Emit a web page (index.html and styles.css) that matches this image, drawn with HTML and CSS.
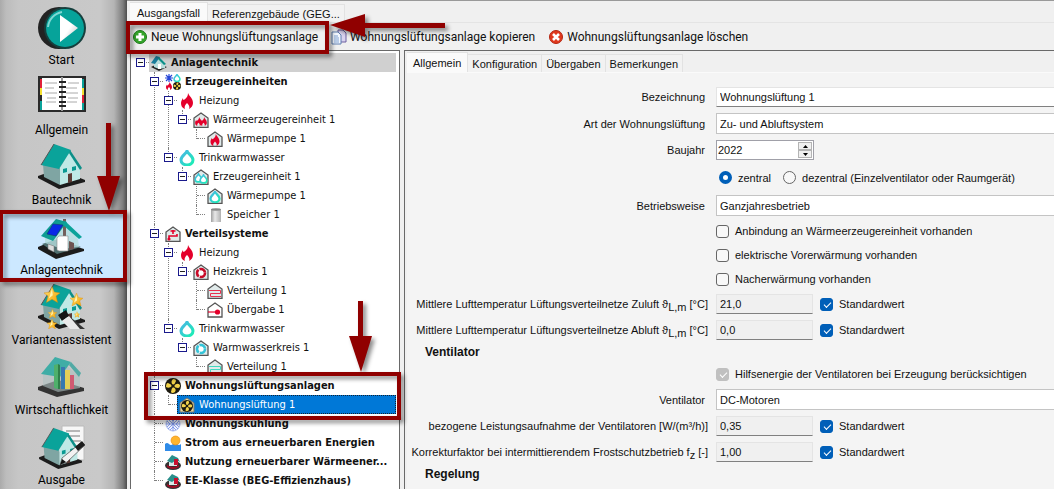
FILE: index.html
```
<!DOCTYPE html>
<html lang="de">
<head>
  <meta charset="UTF-8">
  <meta name="viewport" content="width=device-width, initial-scale=1.0">
  <title>Anlagentechnik</title>
  <link rel="stylesheet" href="styles.css">
</head>
<body>
  <!-- icon sprite -->
  <svg class="sprite" aria-hidden="true">
    <defs>
      <linearGradient id="shine" x1="0" y1="0" x2="1" y2="1">
        <stop offset="0" stop-color="#fff"/><stop offset=".5" stop-color="#fff"/><stop offset="1" stop-color="#bbb"/>
      </linearGradient>
      <linearGradient id="metal" x1="0" x2="1">
        <stop offset="0" stop-color="#a0a0a0"/><stop offset=".4" stop-color="#e8e8e8"/><stop offset="1" stop-color="#b0b0b0"/>
      </linearGradient>
      <linearGradient id="water" x1="0" x2="1" y2="1">
        <stop offset="0" stop-color="#4ab4e6"/><stop offset="1" stop-color="#19f0b4"/>
      </linearGradient>
      <linearGradient id="gold" x1="0" y1="0" x2="1" y2="1">
        <stop offset="0" stop-color="#ffe27a"/><stop offset="1" stop-color="#f5a300"/>
      </linearGradient>
    </defs>
    <symbol id="house-big" viewBox="0 0 48 46">
      <path d="M0 33 20 26 47 37 47 39 21 46 0 35z" fill="#1c1c1c"/>
      <path d="M5 21 22 25V42L6 34z" fill="#7fa5a3"/>
      <path d="M22 25 32 8 42 25V36L22 42z" fill="#bfe9e6"/>
      <path d="M3 22 16 1 33 7 21 26z" fill="#0aa39a"/>
      <path d="M3 22 16 1" stroke="#555" fill="none"/>
      <path d="M32 7 44 25 42 27 31 10z" fill="#0c8f88"/>
      <path d="M25 26l4-1v4l-4 1zM34 24l4-1v4l-4 1z" fill="#0a9a92"/>
      <path d="M30 31l4-1v9l-4 1z" fill="#5c3a34"/>
    </symbol>
    <symbol id="nav-start" viewBox="0 0 48 46">
      <ellipse cx="21" cy="25" rx="21" ry="21" fill="#222"/>
      <circle cx="27" cy="25" r="21" fill="#163f3d"/>
      <circle cx="27" cy="25" r="19" fill="#06a39a"/>
      <path d="M10 24A17 17 0 0 1 24 9" stroke="#7fd8d3" stroke-width="2" fill="none"/>
      <path d="M22 12 40 25 22 39z" fill="url(#shine)"/>
    </symbol>
    <symbol id="nav-book" viewBox="0 0 48 46">
      <path d="M0 3h48v36H0z" fill="#2a2a2a"/>
      <path d="M2 6h4v9H2z" fill="#e02038"/><path d="M2 15h4v7H2z" fill="#f5e030"/><path d="M2 28h4v9H2z" fill="#0aa39a"/>
      <path d="M42 6h4v9h-4z" fill="#0aa39a"/><path d="M42 15h4v7h-4z" fill="#f5e030"/><path d="M42 22h4v8h-4z" fill="#e02038"/><path d="M42 30h4v7h-4z" fill="#0aa39a"/>
      <path d="M4 5h19v32H4zM25 5h19v32H25z" fill="#fff"/>
      <path d="M7 10h12M7 15h9M7 20h12M9 25h9M8 29h10M30 10h11M28 15h11M28 20h12M30 25h10M29 29h10" stroke="#aaa"/>
      <path d="M24 4v34" stroke="#999" stroke-width="2"/>
      <path d="M21 9h7M21 14h7M21 19h7M21 24h7M21 29h7M21 33h7" stroke="#222" stroke-width="2"/>
    </symbol>
    <symbol id="nav-anlage" viewBox="0 0 48 46">
      <path d="M0 34 17 27 46 36 46 38 18 46 0 36z" fill="#1c1c1c"/>
      <path d="M4 31 20 26 43 34 19 41z" fill="#4f6f70"/>
      <path d="M7 24 28 8 40 26 41 34 24 36 7 30z" fill="#b4dcdc" opacity=".8"/>
      <path d="M25 6h3v17h-3z" fill="#73605c"/>
      <path d="M3 23 18 6 29 9 15 28z" fill="#0f9c93"/>
      <path d="M27 8 44 24 41 26 25 12z" fill="#0aa39a"/>
      <path d="M15 11l10 1-7 11-9-2z" fill="#0a28e6" stroke="#12386b" stroke-width=".6"/>
      <path d="M19 25l2-2h9v15h-9l-2-1z" fill="#fff" stroke="#8a8a8a" stroke-width=".6"/>
      <path d="M10 31l6 2v6l-6-3z" fill="#ddd" stroke="#777" stroke-width=".5"/>
      <path d="M31 28l5 2v6l-5 1z" fill="#6d5450"/>
    </symbol>
    <symbol id="star" viewBox="0 0 20 20">
      <path d="M10 0l3 7 7 1-5 4 2 8-7-4-7 4 2-8-5-4 7-1z" fill="url(#gold)" stroke="#d98a00" stroke-width=".5"/>
      <path d="M10 3l1 8-5 4z" fill="#fff3b0"/>
    </symbol>
    <symbol id="nav-variante" viewBox="0 0 48 46">
      <use href="#house-big" width="48" height="46"/>
      <use href="#star" x="6" y="3" width="16" height="17"/>
      <use href="#star" x="32" y="10" width="13" height="13"/>
      <use href="#star" x="10" y="26" width="9" height="9"/>
      <use href="#star" x="8" y="36" width="12" height="10"/>
      <use href="#star" x="36" y="28" width="6" height="7"/>
      <path d="M20 32 28 27 31 33 24 38z" fill="#161616"/>
      <path d="M24 38 31 33 44 46H32z" fill="#e9e9e9"/>
      <path d="M31 33 47 46H42z" fill="#333"/>
    </symbol>
    <symbol id="nav-chart" viewBox="0 0 48 46">
      <path d="M0 34 20 27 46 35 46 38 19 44 0 37z" fill="#333"/>
      <path d="M5 22 20 5 42 24 42 35 20 39 5 33z" fill="#aebfbf" opacity=".6"/>
      <path d="M3 21 17 4 33 9 22 24z" fill="#3fada6"/>
      <path d="M33 9 43 20 41 24 31 12z" fill="#52aaa5"/>
      <path d="M16 12l4-1v25l-4-1z" fill="#4fb06b"/><path d="M20 11l2 1v24l-2 0z" fill="#2f804a"/>
      <path d="M23 14h4v22h-4z" fill="#3778b0"/>
      <path d="M27 17h5v19h-5z" fill="#e3cf58"/>
      <path d="M32 22h4v14h-4z" fill="#d05a72"/>
    </symbol>
    <symbol id="nav-ausgabe" viewBox="0 0 48 46">
      <path d="M24 3h22v34H24z" fill="#f7f7f7" stroke="#bbb"/>
      <path d="M28 8h14M28 13h14M34 18h9M38 23h6" stroke="#777"/>
      <use href="#house-big" x="0" y="4" width="46" height="42"/>
      <path d="M22 42 24 35 44 19 47 22 29 39z" fill="#f2f2f2" stroke="#333" stroke-width=".6"/>
      <path d="M37 24 44 18 47 22 40 28z" fill="#1c1c1c"/>
      <path d="M22 42 24 36 28 39z" fill="#111"/>
    </symbol>

    <!-- 16px icons -->
    <symbol id="t-anlage" viewBox="0 0 16 16">
      <path d="M0 12 6 9l10 3-8 4z" fill="#222"/>
      <path d="M3 7 10 3l4 5v5l-6 1-5-2z" fill="#b9dedd"/>
      <path d="M0 8 5 1l4 1-5 7z" fill="#1a7d9b"/>
      <path d="M8 2l7 7-2 1-6-6z" fill="#0a8f88"/>
      <path d="M7 9h3v5H7z" fill="#fff"/>
    </symbol>
    <symbol id="flame" viewBox="0 0 16 16">
      <path d="M9 0C10 3 14 5 14 10c0 3-2 5-4 6 1-2 0-4-2-6-2 2-3 4-2 6-3-1-4-3-4-6 0-2 1-3 2-5 0 1 0 2 1 2C7 5 9 4 9 0z" fill="#e4002b"/>
    </symbol>
    <symbol id="drop" viewBox="0 0 16 16">
      <path d="M8 1c1 3 6 5 6 9a6 5 0 0 1-12 0c0-4 5-6 6-9z" fill="#fff" stroke="url(#water)" stroke-width="3"/>
    </symbol>
    <symbol id="fan" viewBox="0 0 16 16">
      <circle cx="8" cy="8" r="8" fill="#1c1a10"/>
      <path d="M8 7Q5 4 8 1 11 1 11 3 10 6 8 7zM9 8q3-4 6-1 0 3-2 3-3 0-4-2zM8 9q4 2 2 5-3 2-4 0 0-3 2-5zM7 8q-3 3-6 1Q1 5 3 5q3 1 4 3z" fill="#f3d34a"/>
      <circle cx="8" cy="8" r="1.4" fill="#1c1a10"/>
    </symbol>
    <symbol id="snow" viewBox="0 0 16 16">
      <circle cx="8" cy="8" r="7" fill="#f2f5ff" stroke="#a9b9ef"/>
      <path d="M8 1v14M1 8h14M3 3l10 10M13 3 3 13M5 2l3 3 3-3M5 14l3-3 3 3M2 5l3 3-3 3M14 5l-3 3 3 3" stroke="#6f8ae8" fill="none" stroke-width=".8"/>
    </symbol>
    <symbol id="snow-small" viewBox="0 0 8 8">
      <path d="M4 0v8M0 4h8M1 1l6 6M7 1 1 7" stroke="#2747d8" stroke-width="1.2"/>
    </symbol>
    <symbol id="t-erzeuger" viewBox="0 0 16 16">
      <use href="#snow-small" width="8" height="8"/>
      <use href="#drop" x="8" width="8" height="8"/>
      <use href="#flame" y="8" width="8" height="8"/>
      <use href="#fan" x="8" y="8" width="8" height="8"/>
    </symbol>
    <symbol id="shell" viewBox="0 0 16 16">
      <path d="M1 15.300V6L8 1l7 5v9.300z" fill="#e0eaea" stroke="#555" stroke-width="1.300"/>
    </symbol>
    <symbol id="t-flames" viewBox="0 0 16 16">
      <use href="#shell" width="16" height="16"/>
      <use href="#flame" x="1" y="4" width="9" height="11"/><use href="#flame" x="6" y="4" width="9" height="11"/>
    </symbol>
    <symbol id="t-flame" viewBox="0 0 16 16">
      <use href="#shell" width="16" height="16"/><use href="#flame" x="2" y="3" width="12" height="12"/>
    </symbol>
    <symbol id="t-drops" viewBox="0 0 16 16">
      <use href="#shell" width="16" height="16"/>
      <use href="#drop" x="1" y="4" width="9" height="10"/><use href="#drop" x="6" y="5" width="9" height="10"/>
    </symbol>
    <symbol id="t-drop" viewBox="0 0 16 16">
      <use href="#shell" width="16" height="16"/><use href="#drop" x="2" y="3" width="12" height="12"/>
    </symbol>
    <symbol id="t-tank" viewBox="0 0 16 16">
      <path d="M4 2h10v13H4z" fill="url(#metal)"/><ellipse cx="9" cy="2.500" rx="5" ry="1.200" fill="#888"/>
    </symbol>
    <symbol id="t-tap" viewBox="0 0 16 16">
      <use href="#shell" width="16" height="16"/>
      <path d="M8 4v4M5.500 5h5M4 13v-3h8V8" stroke="#e4002b" stroke-width="1.600" fill="none"/><circle cx="4" cy="13" r="1.600" fill="#e4002b"/>
    </symbol>
    <symbol id="t-cycle" viewBox="0 0 16 16">
      <use href="#shell" width="16" height="16"/>
      <circle cx="8" cy="9" r="4" fill="#fff" stroke="#c80a28" stroke-width="2.600" stroke-dasharray="7.400 1"/>
    </symbol>
    <symbol id="t-cycle-water" viewBox="0 0 16 16">
      <use href="#shell" width="16" height="16"/>
      <circle cx="8" cy="9" r="4" fill="#fff" stroke="#35c4d8" stroke-width="2.600" stroke-dasharray="7.400 1"/>
    </symbol>
    <symbol id="t-pipes" viewBox="0 0 16 16">
      <use href="#shell" width="16" height="16"/>
      <path d="M2 7.500h11.500v3H3.500v3H14" stroke="#e8304e" fill="none"/>
    </symbol>
    <symbol id="t-pipes-water" viewBox="0 0 16 16">
      <use href="#shell" width="16" height="16"/>
      <path d="M2 7.500h11.500v3H3.500v3H14" stroke="#3fd8c0" fill="none"/>
    </symbol>
    <symbol id="t-transfer" viewBox="0 0 16 16">
      <path d="M1 15V6L8 1l7 5v9z" fill="#fff" stroke="#555" stroke-width="1.300"/>
      <path d="M1 10h9" stroke="#e4002b" stroke-width="1.200"/><circle cx="10.500" cy="10" r="2.600" fill="#e4002b"/>
    </symbol>
    <symbol id="t-housefan" viewBox="0 0 16 16">
      <path d="M1 15V6L8 1l7 5v9z" fill="#e6d79a" stroke="#777"/><use href="#fan" x="2" y="3" width="12" height="12"/>
    </symbol>
    <symbol id="t-sun" viewBox="0 0 16 16">
      <path d="M0 9q2-2 4 0t4 0 4 0 4 0v7H0z" fill="#2f8be8"/><circle cx="10.500" cy="5.500" r="4.500" fill="#ffb52e" stroke="#e88a10" stroke-width=".6"/>
    </symbol>
    <symbol id="t-ee" viewBox="0 0 16 16">
      <ellipse cx="8" cy="11.500" rx="8" ry="4.500" fill="#333"/>
      <path d="M4 6h8v6H4z" fill="#d8e8e8"/><path d="M2 7l5-6 6 3 2 4-4-2-4 3z" fill="#2a8f8b"/>
      <path d="M9 5h4v6H9z" fill="#c8102e"/><path d="M2 11q6 4 12 0v2q-6 4-12 0z" fill="#a00c24"/>
    </symbol>
    <symbol id="b-add" viewBox="0 0 16 16">
      <circle cx="8" cy="8" r="6.500" fill="#35a52b" stroke="#1d7a1a"/><path d="M8 4v8M4 8h8" stroke="#fff" stroke-width="3"/>
    </symbol>
    <symbol id="b-copy" viewBox="0 0 16 16">
      <path d="M7 1h5l3 3v9H7z" fill="#d9d3ef" stroke="#6c5fa0"/><path d="M1 3h6l3 3v9H1z" fill="#f4f8ff" stroke="#5f7fb0"/><path d="M3 7h4M3 9h5M3 11h5M3 13h5" stroke="#7fa0d0"/>
    </symbol>
    <symbol id="b-del" viewBox="0 0 16 16">
      <circle cx="8" cy="8" r="6.500" fill="#e0381c" stroke="#b32410"/><path d="M5 5l6 6M11 5l-6 6" stroke="#fff" stroke-width="2.600"/>
    </symbol>
  </svg>

  <div class="app">
    <nav class="sidebar">
      <a href="#start"><svg><use href="#nav-start"/></svg>Start</a>
      <a href="#allgemein"><svg><use href="#nav-book"/></svg>Allgemein</a>
      <a href="#bautechnik"><svg><use href="#house-big"/></svg>Bautechnik</a>
      <a href="#anlagentechnik" class="active"><svg><use href="#nav-anlage"/></svg>Anlagentechnik</a>
      <a href="#varianten"><svg><use href="#nav-variante"/></svg>Variantenassistent</a>
      <a href="#wirtschaft"><svg><use href="#nav-chart"/></svg>Wirtschaftlichkeit</a>
      <a href="#ausgabe"><svg><use href="#nav-ausgabe"/></svg>Ausgabe</a>
    </nav>

    <main class="main">
      <div class="tabs case-tabs">
        <button class="tab active">Ausgangsfall</button>
        <button class="tab">Referenzgebäude (GEG...</button>
      </div>
      <div class="toolbar">
        <button><svg><use href="#b-add"/></svg>Neue Wohnungslüftungsanlage</button>
        <button><svg><use href="#b-copy"/></svg>Wohnungslüftungsanlage kopieren</button>
        <button><svg><use href="#b-del"/></svg>Wohnungslüftungsanlage löschen</button>
      </div>

      <div class="panels">
        <section class="tree-panel">
          <ul class="tree">
            <li>
              <div class="row bold current"><button class="toggle" aria-label="Zuklappen"></button><span class="node"><svg><use href="#t-anlage"/></svg>Anlagentechnik</span></div>
              <ul>
                <li>
                  <div class="row bold"><button class="toggle" aria-label="Zuklappen"></button><span class="node"><svg><use href="#t-erzeuger"/></svg>Erzeugereinheiten</span></div>
                  <ul>
                    <li>
                      <div class="row"><button class="toggle" aria-label="Zuklappen"></button><span class="node"><svg><use href="#flame"/></svg>Heizung</span></div>
                      <ul>
                        <li>
                          <div class="row"><button class="toggle" aria-label="Zuklappen"></button><span class="node"><svg><use href="#t-flames"/></svg>Wärmeerzeugereinheit 1</span></div>
                          <ul>
                            <li><div class="row"><span class="node"><svg><use href="#t-flame"/></svg>Wärmepumpe 1</span></div></li>
                          </ul>
                        </li>
                      </ul>
                    </li>
                    <li>
                      <div class="row"><button class="toggle" aria-label="Zuklappen"></button><span class="node"><svg><use href="#drop"/></svg>Trinkwarmwasser</span></div>
                      <ul>
                        <li>
                          <div class="row"><button class="toggle" aria-label="Zuklappen"></button><span class="node"><svg><use href="#t-drops"/></svg>Erzeugereinheit 1</span></div>
                          <ul>
                            <li><div class="row"><span class="node"><svg><use href="#t-drop"/></svg>Wärmepumpe 1</span></div></li>
                            <li><div class="row"><span class="node"><svg><use href="#t-tank"/></svg>Speicher 1</span></div></li>
                          </ul>
                        </li>
                      </ul>
                    </li>
                  </ul>
                </li>
                <li>
                  <div class="row bold"><button class="toggle" aria-label="Zuklappen"></button><span class="node"><svg><use href="#t-tap"/></svg>Verteilsysteme</span></div>
                  <ul>
                    <li>
                      <div class="row"><button class="toggle" aria-label="Zuklappen"></button><span class="node"><svg><use href="#flame"/></svg>Heizung</span></div>
                      <ul>
                        <li>
                          <div class="row"><button class="toggle" aria-label="Zuklappen"></button><span class="node"><svg><use href="#t-cycle"/></svg>Heizkreis 1</span></div>
                          <ul>
                            <li><div class="row"><span class="node"><svg><use href="#t-pipes"/></svg>Verteilung 1</span></div></li>
                            <li><div class="row"><span class="node"><svg><use href="#t-transfer"/></svg>Übergabe 1</span></div></li>
                          </ul>
                        </li>
                      </ul>
                    </li>
                    <li>
                      <div class="row"><button class="toggle" aria-label="Zuklappen"></button><span class="node"><svg><use href="#drop"/></svg>Trinkwarmwasser</span></div>
                      <ul>
                        <li>
                          <div class="row"><button class="toggle" aria-label="Zuklappen"></button><span class="node"><svg><use href="#t-cycle-water"/></svg>Warmwasserkreis 1</span></div>
                          <ul>
                            <li><div class="row"><span class="node"><svg><use href="#t-pipes-water"/></svg>Verteilung 1</span></div></li>
                          </ul>
                        </li>
                      </ul>
                    </li>
                  </ul>
                </li>
                <li>
                  <div class="row bold"><button class="toggle" aria-label="Zuklappen"></button><span class="node"><svg><use href="#fan"/></svg>Wohnungslüftungsanlagen</span></div>
                  <ul>
                    <li><div class="row selected"><span class="node"><svg><use href="#t-housefan"/></svg>Wohnungslüftung 1</span></div></li>
                  </ul>
                </li>
                <li><div class="row bold"><span class="node"><svg><use href="#snow"/></svg>Wohnungskühlung</span></div></li>
                <li><div class="row bold"><span class="node"><svg><use href="#t-sun"/></svg>Strom aus erneuerbaren Energien</span></div></li>
                <li><div class="row bold"><span class="node"><svg><use href="#t-ee"/></svg>Nutzung erneuerbarer Wärmeener...</span></div></li>
                <li><div class="row bold"><span class="node"><svg><use href="#t-ee"/></svg>EE-Klasse (BEG-Effizienzhaus)</span></div></li>
              </ul>
            </li>
          </ul>
        </section>

        <section class="detail">
          <div class="tabs detail-tabs">
            <button class="tab active">Allgemein</button>
            <button class="tab">Konfiguration</button>
            <button class="tab">Übergaben</button>
            <button class="tab">Bemerkungen</button>
          </div>
          <form class="form">
            <div class="field">
              <label for="name">Bezeichnung</label>
              <input class="text" type="text" id="name" value="Wohnungslüftung 1">
            </div>
            <div class="field">
              <label for="art">Art der Wohnungslüftung</label>
              <select id="art"><option>Zu- und Abluftsystem</option></select>
            </div>
            <div class="field">
              <label for="baujahr">Baujahr</label>
              <div class="spin">
                <input type="text" id="baujahr" value="2022">
                <div class="spin-buttons">
                  <button type="button" aria-label="Mehr"><svg viewBox="0 0 5 3"><path d="M0 3h5L2.500 0z"/></svg></button>
                  <button type="button" aria-label="Weniger"><svg viewBox="0 0 5 3"><path d="M0 0h5L2.500 3z"/></svg></button>
                </div>
              </div>
            </div>
            <div class="options radios">
              <label><input type="radio" name="system" checked>zentral</label>
              <label><input type="radio" name="system">dezentral (Einzelventilator oder Raumgerät)</label>
            </div>
            <div class="field">
              <label for="betrieb">Betriebsweise</label>
              <select id="betrieb"><option>Ganzjahresbetrieb</option></select>
            </div>
            <div class="options"><label><input type="checkbox">Anbindung an Wärmeerzeugereinheit vorhanden</label></div>
            <div class="options"><label><input type="checkbox">elektrische Vorerwärmung vorhanden</label></div>
            <div class="options"><label><input type="checkbox">Nacherwärmung vorhanden</label></div>
            <div class="field unit">
              <label for="zuluft">Mittlere Lufttemperatur Lüftungsverteilnetze Zuluft ϑ<sub>L,m</sub> [°C]</label>
              <input class="text short" type="text" id="zuluft" value="21,0" readonly>
              <label class="std"><input type="checkbox" checked>Standardwert</label>
            </div>
            <div class="field unit">
              <label for="abluft">Mittlere Lufttemperatur Lüftungsverteilnetze Abluft ϑ<sub>L,m</sub> [°C]</label>
              <input class="text short" type="text" id="abluft" value="0,0" readonly>
              <label class="std"><input type="checkbox" checked>Standardwert</label>
            </div>
            <h2>Ventilator</h2>
            <div class="options"><label><input type="checkbox" checked disabled>Hilfsenergie der Ventilatoren bei Erzeugung berücksichtigen</label></div>
            <div class="field">
              <label for="ventilator">Ventilator</label>
              <select id="ventilator"><option>DC-Motoren</option></select>
            </div>
            <div class="field unit">
              <label for="leistung">bezogene Leistungsaufnahme der Ventilatoren [W/(m³/h)]</label>
              <input class="text short" type="text" id="leistung" value="0,35" readonly>
              <label class="std"><input type="checkbox" checked>Standardwert</label>
            </div>
            <div class="field unit">
              <label for="faktor">Korrekturfaktor bei intermittierendem Frostschutzbetrieb f<sub>z</sub> [-]</label>
              <input class="text short" type="text" id="faktor" value="1,00" readonly>
              <label class="std"><input type="checkbox" checked>Standardwert</label>
            </div>
            <h2>Regelung</h2>
          </form>
        </section>
      </div>
    </main>
  </div>

  <!-- red markers over the window -->
  <svg class="markers" aria-hidden="true">
    <g fill="none" stroke="#900000" stroke-width="4">
      <path d="M1 212h124v68H1z"/>
      <path d="M128 23h199v29H128z"/>
      <path d="M146 374h253v44H146z"/>
    </g>
    <g fill="#900000">
      <path d="M106 123h5v53h9l-11 35-12-35h9z"/>
      <path d="M445 23v5h-80v9l-35-12 35-11v9z"/>
      <path d="M358 301h5v35h9l-11 36-12-36h9z"/>
    </g>
  </svg>
</body>
</html>
```
FILE: styles.css
```
* {
  box-sizing: border-box;
}

body, html {
  margin: 0;
  padding: 0;
  height: 100%;
  overflow: hidden;
}

body {
  background: #f0f0f0;
  color: #111;
  font-family: Roboto, "Noto Sans", sans-serif;
  font-size: 12px;
}

button, input, select {
  font: inherit;
  color: inherit;
  margin: 0;
  padding: 0;
  border: 0;
  background: none;
}

ul {
  list-style: none;
  margin: 0;
  padding: 0;
}

.sprite {
  position: absolute;
  width: 0;
  height: 0;
}

.app {
  display: flex;
  height: 100vh;
}

/* Left navigation */
.sidebar {
  flex: none;
  width: 127px;
  padding-right: 4px;
  overflow: hidden;
  background: linear-gradient(to right, #aaa 0, #bcbcbc 6px, #c6c6c6 18px, #c9c9c9 100px, #b4b4b4 114px, #7c7c7c 123px, #4c4c4c 127px);
}

.sidebar a {
  display: flex;
  flex-direction: column;
  align-items: center;
  gap: 2px;
  height: 70px;
  padding-top: 3px;
  line-height: 18px;
  color: #000;
  text-decoration: none;
}

.sidebar svg {
  width: 48px;
  height: 46px;
}

.sidebar a.active {
  background: #cce8ff;
}

/* Main area */
.main {
  flex: 1;
  min-width: 0;
  display: flex;
  flex-direction: column;
  border-top: 1px solid #999;
  padding-left: 3px;
}

.tabs {
  display: flex;
  align-items: flex-end;
  font-family: "Liberation Sans", Arial, sans-serif;
  font-size: 11px;
}

.tab {
  height: 18px;
  border: 1px solid #e2e2e2;
  border-bottom: 0;
  border-left: 0;
  background: #f2f2f2;
  white-space: nowrap;
}

.tab.active {
  height: 20px;
  padding-bottom: 2px;
  background: #fafafa;
}

.case-tabs {
  flex: none;
  height: 22px;
  border-bottom: 1px solid #e4e4e4;
}

.case-tabs .tab {
  padding: 0 4px;
}

.case-tabs .tab.active {
  padding: 0 7px;
}

.toolbar {
  flex: none;
  display: flex;
  align-items: center;
  gap: 13px;
  height: 27px;
  padding-left: 2px;
}

.toolbar button {
  display: flex;
  align-items: center;
  gap: 3px;
  white-space: nowrap;
}

.toolbar svg {
  width: 16px;
  height: 16px;
}

.panels {
  flex: 1;
  min-height: 0;
  display: flex;
  gap: 4px;
}

/* Tree */
.tree-panel {
  flex: none;
  width: 270px;
  padding: 2px 3px 0 4px;
  overflow: hidden;
  background: #fff;
  border: 1px solid #696969;
  border-bottom: 0;
  font-family: "DejaVu Sans Condensed", "DejaVu Sans", Tahoma, sans-serif;
  font-stretch: condensed;
  font-size: 11px;
}

.tree ul {
  margin-left: 14px;
}

.tree li {
  position: relative;
}

.tree ul > li::before {
  content: "";
  position: absolute;
  left: 5px;
  top: 0;
  bottom: 0;
  border-left: 1px dotted #808080;
}

.tree ul > li:last-child::before {
  bottom: auto;
  height: 10px;
}

.row {
  position: relative;
  height: 19px;
  padding-left: 14px;
  white-space: nowrap;
}

.row::before {
  content: "";
  position: absolute;
  left: 6px;
  top: 9px;
  width: 8px;
  border-top: 1px dotted #808080;
}

.toggle {
  position: absolute;
  left: 1px;
  top: 5px;
  width: 9px;
  height: 9px;
  border: 1px solid #1a1a8c;
  background: linear-gradient(#222, #222) center / 5px 1px no-repeat #fff;
}

.node {
  display: flex;
  align-items: center;
  gap: 4px;
  height: 19px;
  padding-left: 2px;
}

.node svg {
  flex: none;
  width: 16px;
  height: 16px;
}

.bold {
  font-weight: bold;
}

.current .node {
  background: #d0d0d0;
}

.selected .node {
  background: #0078d7;
  color: #fff;
  outline: 1px dotted #123;
  outline-offset: -1px;
}

/* Detail form */
.detail {
  flex: 1;
  min-width: 0;
  overflow: hidden;
  border-top: 1px solid #696969;
  border-left: 1px solid #696969;
  padding-left: 2px;
}

.detail-tabs {
  height: 21px;
}

.detail-tabs .tab {
  padding: 0 4px;
}

.detail-tabs .tab.active {
  padding: 0 6px;
}

.form {
  height: 100%;
  padding-top: 11px;
  background: #f4f4f4;
  border-top: 1px solid #fafafa;
  font-family: "Liberation Sans", Arial, sans-serif;
  font-size: 11px;
}

.field {
  display: flex;
  align-items: center;
  padding: 3px 0;
}

.field > label:first-child {
  width: 298px;
  margin-right: 11px;
  text-align: right;
  line-height: 20px;
  white-space: nowrap;
}

.unit > label:first-child {
  width: 301px;
  margin-right: 8px;
}

sub {
  font-size: 11px;
  line-height: 1px;
  vertical-align: -3px;
}

.text, select {
  flex: 1;
  height: 20px;
  padding: 0 3px;
  background: #fff;
  border: 1px solid #e4e4e4;
  border-right: 0;
  border-bottom-color: #808080;
}

.text.short {
  flex: none;
  width: 97px;
  background: #f0f0f0;
  border-right: 1px solid #e4e4e4;
}

select {
  appearance: none;
  height: 21px;
  border-color: #c4c4c4;
}

.spin {
  display: flex;
  width: 98px;
  height: 20px;
  padding: 1px;
  background: #fff;
  border: 1px solid #a0a0a8;
}

.spin input {
  flex: 1;
  min-width: 0;
}

.spin-buttons {
  display: flex;
  flex-direction: column;
  width: 14px;
}

.spin-buttons button {
  flex: 1;
  display: flex;
  align-items: center;
  justify-content: center;
  background: #f0f0f0;
  border: 1px solid #b4b4b4;
}

.spin-buttons svg {
  width: 5px;
  height: 3px;
}

.options {
  display: flex;
  align-items: center;
  gap: 12px;
  height: 24px;
  padding-left: 309px;
  white-space: nowrap;
}

.radios {
  height: 29px;
  padding-left: 312px;
}

.options label, .std {
  display: flex;
  align-items: center;
  gap: 6px;
}

.std {
  margin-left: 7px;
}

input[type="checkbox"], input[type="radio"] {
  appearance: none;
  flex: none;
  width: 13px;
  height: 13px;
  border: 1px solid #666;
  border-radius: 3px;
  background: #f8f8f8;
}

input[type="radio"] {
  border-radius: 50%;
}

input[type="radio"]:checked {
  border: 4px solid #005fb8;
  background: #fff;
}

input[type="checkbox"]:checked {
  position: relative;
  border-color: #005fb8;
  background: #005fb8;
}

input[type="checkbox"]:checked::after {
  content: "";
  position: absolute;
  left: 3px;
  top: 3px;
  width: 6px;
  height: 3px;
  border-left: 1px solid #fff;
  border-bottom: 1px solid #fff;
  transform: rotate(-45deg);
}

input[type="checkbox"]:disabled {
  border-color: #c0c0c0;
  background: #c0c0c0;
}

h2 {
  margin: 0;
  padding-left: 18px;
  font-size: 12px;
  line-height: 19px;
}

/* Marker frames and arrows */
.markers {
  position: absolute;
  left: 0;
  top: 0;
  width: 100%;
  height: 100%;
  pointer-events: none;
  filter: drop-shadow(3px 3px 2px rgba(0, 0, 0, 0.45));
}
```
